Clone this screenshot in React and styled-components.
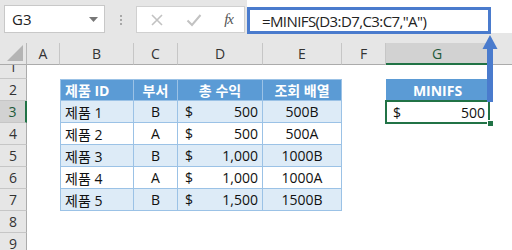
import React from "react";
import styled, { createGlobalStyle } from "styled-components";

const GlobalStyle = createGlobalStyle`
  html, body {
    margin: 0;
    padding: 0;
    background: #ffffff;
    overflow: hidden;
  }
`;

const UI_FONT = `"Open Sans", "Noto Sans CJK KR", sans-serif`;
const GREEN = "#217346";
const ANNOT = "#4a7bcd";

const COLS = [
  { name: "A", width: 33 },
  { name: "B", width: 74 },
  { name: "C", width: 44 },
  { name: "D", width: 85 },
  { name: "E", width: 79 },
  { name: "F", width: 44 },
  { name: "G", width: 103 },
  { name: "H", width: 40 },
];

const products = [
  ["제품 1", "B", "500", "500B"],
  ["제품 2", "A", "500", "500A"],
  ["제품 3", "B", "1,000", "1000B"],
  ["제품 4", "A", "1,000", "1000A"],
  ["제품 5", "B", "1,500", "1500B"],
];

const Window = styled.div`
  position: relative;
  width: 512px;
  height: 250px;
  overflow: hidden;
  background: #ffffff;
  font-family: ${UI_FONT};
`;

const Toolbar = styled.div`
  display: flex;
  align-items: flex-start;
  height: 43px;
  background: #e6e6e6;
`;

const NameBox = styled.div`
  box-sizing: border-box;
  display: flex;
  align-items: center;
  justify-content: space-between;
  margin: 5px 0 0 4px;
  width: 101px;
  height: 28px;
  padding: 0 6px 0 7px;
  background: #ffffff;
  border: 1px solid #c8c8c8;
  font-size: 15px;
  color: #222;
`;

const Grip = styled.div`
  display: flex;
  flex-direction: column;
  gap: 2px;
  margin: 15px 14px 0 15px;

  span {
    width: 2px;
    height: 2px;
    background: #a8a8a8;
  }
`;

const FxGroup = styled.div`
  box-sizing: border-box;
  display: flex;
  align-items: center;
  justify-content: space-between;
  margin-top: 6px;
  width: 109px;
  height: 27px;
  padding: 0 11px 0 13px;
  background: #ffffff;
  border: 1px solid #d0d0d0;
`;

const FxLabel = styled.span`
  font-family: "Liberation Serif", serif;
  font-style: italic;
  font-size: 15px;
  color: #555;
  letter-spacing: -1px;
`;

const FormulaInput = styled.div`
  flex: 1;
  height: 33px;
  margin-left: 2px;
  background: #ffffff;
`;

const FormulaHighlight = styled.div`
  box-sizing: border-box;
  display: flex;
  align-items: center;
  margin-top: 7px;
  width: 244px;
  height: 27px;
  padding-left: 12px;
  border: 3px solid ${ANNOT};
  font-size: 15px;
  color: #222;
  letter-spacing: -0.6px;
  white-space: nowrap;
`;

const Sheet = styled.div`
  display: grid;
  grid-template-columns: 27px ${COLS.map((c) => `${c.width}px`).join(" ")};
  grid-template-rows: 22px 14px repeat(8, 22px);
  font-family: ${UI_FONT};
`;

const Corner = styled.div`
  position: relative;
  background: #e6e6e6;
  border-right: 1px solid #b8b8b8;
  border-bottom: 1px solid #ababab;
  box-sizing: border-box;

  &::after {
    content: "";
    position: absolute;
    right: 3px;
    bottom: 3px;
    border-style: solid;
    border-width: 0 0 16px 16px;
    border-color: transparent transparent #b4b4b4 transparent;
  }
`;

const ColHead = styled.div`
  box-sizing: border-box;
  display: flex;
  align-items: center;
  justify-content: center;
  background: ${(p) => (p.$active ? "#d2d2d2" : "#e6e6e6")};
  border-right: 1px solid #c6c6c6;
  border-bottom: ${(p) => (p.$active ? `2px solid ${GREEN}` : "1px solid #ababab")};
  font-size: 14px;
  color: ${(p) => (p.$active ? "#1e5a3a" : "#333")};
`;

const RowHead = styled.div`
  box-sizing: border-box;
  display: flex;
  align-items: ${(p) => (p.$clipped ? "flex-end" : "center")};
  justify-content: center;
  overflow: hidden;
  line-height: 22px;
  background: ${(p) => (p.$active ? "#d2d2d2" : "#e6e6e6")};
  border-right: ${(p) => (p.$active ? `2px solid ${GREEN}` : "1px solid #ababab")};
  border-bottom: 1px solid #c6c6c6;
  font-size: 14px;
  color: ${(p) => (p.$active ? "#1e5a3a" : "#333")};
`;

const FILLS = {
  head: "#5b9bd5",
  band: "#ddebf7",
  plain: "#ffffff",
};

const Cell = styled.div`
  box-sizing: border-box;
  position: relative;
  display: flex;
  align-items: center;
  justify-content: ${(p) =>
    p.$align === "center" ? "center" : p.$align === "split" ? "space-between" : "flex-start"};
  padding: ${(p) => (p.$align === "split" ? "0 4px 0 7px" : "0 4px")};
  white-space: nowrap;
  font-size: 14px;
  font-weight: ${(p) => (p.$fill === "head" ? 700 : 400)};
  color: ${(p) => (p.$fill === "head" ? "#ffffff" : "#111")};
  background: ${(p) => (p.$fill ? FILLS[p.$fill] : "transparent")};
  border-right: ${(p) => (p.$boxed ? "1px solid #9bc2e6" : "none")};
  border-bottom: ${(p) => (p.$boxed ? "1px solid #9bc2e6" : "none")};
  border-left: ${(p) => (p.$first ? "1px solid #9bc2e6" : "none")};
  border-top: ${(p) => (p.$top ? "1px solid #9bc2e6" : "none")};
  box-shadow: ${(p) =>
    p.$selected ? `0 0 0 1px ${GREEN}, inset 0 0 0 1px ${GREEN}` : "none"};
  z-index: ${(p) => (p.$selected ? 1 : 0)};
`;

const FillHandle = styled.span`
  position: absolute;
  right: -5px;
  bottom: -4px;
  width: 5px;
  height: 5px;
  background: ${GREEN};
  border: 1px solid #ffffff;
`;

const Arrow = styled.svg`
  position: absolute;
  left: 481px;
  top: 34px;
  z-index: 5;
`;

const Chevron = () => (
  <svg width="9" height="5" viewBox="0 0 9 5">
    <polygon points="0,0 9,0 4.5,5" fill="#777" />
  </svg>
);

const CancelIcon = () => (
  <svg width="14" height="14" viewBox="0 0 14 14">
    <path d="M2 2 L12 12 M12 2 L2 12" stroke="#c2c2c2" strokeWidth="1.6" fill="none" />
  </svg>
);

const EnterIcon = () => (
  <svg width="16" height="14" viewBox="0 0 16 14">
    <path d="M1.5 7.5 L6 12 L14.5 2" stroke="#c2c2c2" strokeWidth="2" fill="none" />
  </svg>
);

const tableCell = (row, col) => {
  // row: 2..7, col index: 1 (B) .. 4 (E)
  const base = { $boxed: true, $first: col === 1, $top: row === 2 };
  if (row === 2) {
    const labels = ["제품 ID", "부서", "총 수익", "조회 배열"];
    return { ...base, $fill: "head", $align: col === 1 ? "left" : "center", text: labels[col - 1] };
  }
  const item = products[row - 3];
  const fill = row % 2 === 1 ? "band" : "plain";
  if (col === 3) {
    return { ...base, $fill: fill, $align: "split", parts: ["$", item[2]] };
  }
  return { ...base, $fill: fill, $align: col === 1 ? "left" : "center", text: item[col - 1] };
};

const cellProps = (row, col) => {
  if (row >= 2 && row <= 7 && col >= 1 && col <= 4) return tableCell(row, col);
  if (col === 6 && row === 2) return { $fill: "head", $align: "center", text: "MINIFS" };
  if (col === 6 && row === 3)
    return { $align: "split", $selected: true, parts: ["$", "500"], handle: true };
  return {};
};

const App = () => {
  const rows = [1, 2, 3, 4, 5, 6, 7, 8, 9];
  return (
    <Window>
      <GlobalStyle />
      <Toolbar>
        <NameBox>
          G3
          <Chevron />
        </NameBox>
        <Grip>
          <span />
          <span />
          <span />
        </Grip>
        <FxGroup>
          <CancelIcon />
          <EnterIcon />
          <FxLabel>fx</FxLabel>
        </FxGroup>
        <FormulaInput>
          <FormulaHighlight>=MINIFS(D3:D7,C3:C7,"A")</FormulaHighlight>
        </FormulaInput>
      </Toolbar>

      <Sheet>
        <Corner />
        {COLS.map((c) => (
          <ColHead key={c.name} $active={c.name === "G"}>
            {c.name === "H" ? "" : c.name}
          </ColHead>
        ))}
        {rows.map((r) => (
          <React.Fragment key={r}>
            <RowHead $active={r === 3} $clipped={r === 1}>
              {r}
            </RowHead>
            {COLS.map((c, ci) => {
              const { text, parts, handle, ...props } = r === 1 ? {} : cellProps(r, ci);
              return (
                <Cell key={c.name} {...props}>
                  {parts ? (
                    <>
                      <span>{parts[0]}</span>
                      <span>{parts[1]}</span>
                    </>
                  ) : (
                    text
                  )}
                  {handle && <FillHandle />}
                </Cell>
              );
            })}
          </React.Fragment>
        ))}
      </Sheet>

      <Arrow width="18" height="68" viewBox="0 0 18 68">
        <rect x="6" y="13" width="6" height="55" fill={ANNOT} />
        <polygon points="9,1 1.5,15 16.5,15" fill={ANNOT} />
      </Arrow>
    </Window>
  );
};

export default App;
